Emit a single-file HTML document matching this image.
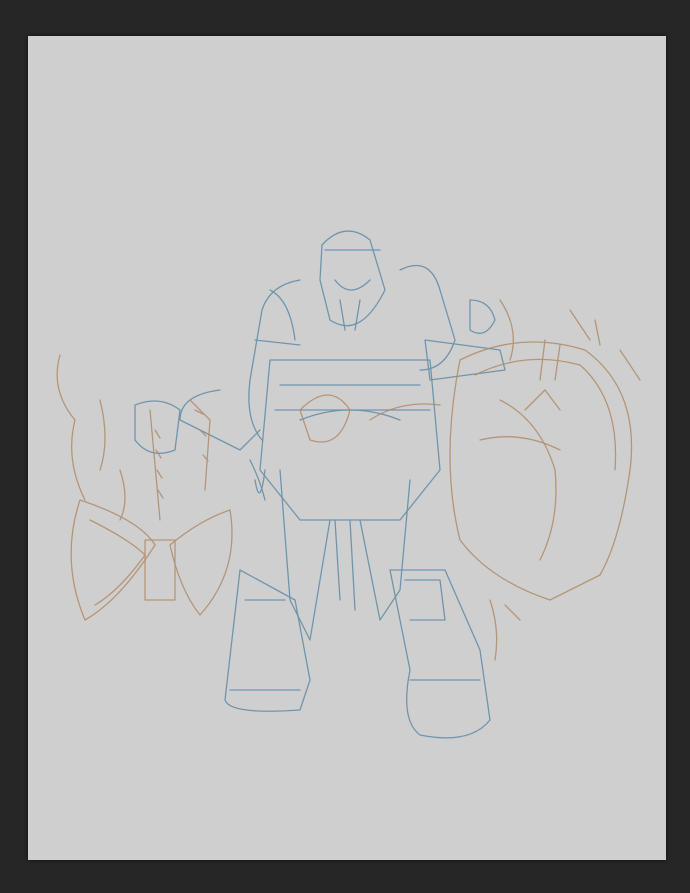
<!DOCTYPE html>
<html><head><style>
html,body{margin:0;padding:0;background:#262626;width:690px;height:893px;overflow:hidden}
.c{position:absolute;left:28px;top:36px;width:638px;height:824px;background:#cfcfcf;box-shadow:0 0 4px #111}
svg{position:absolute;left:0;top:0}
</style></head><body>
<div class="c"></div>
<svg width="690" height="893" fill="none" stroke-linecap="round" stroke-linejoin="round">
<g stroke="#5f8ca8" stroke-width="1.3" opacity="0.85">
<path d="M322 245 Q345 220 370 240 L385 290 Q360 340 330 320 L320 280 Z"/>
<path d="M325 250 L380 250 M335 280 Q350 300 370 280 M340 300 L345 330 M360 300 L355 330"/>
<path d="M300 280 Q270 285 262 310 L250 380 Q245 420 262 440"/>
<path d="M270 290 Q290 300 295 340 M255 340 L300 345"/>
<path d="M400 270 Q430 255 440 290 L455 340 Q445 370 420 370"/>
<path d="M425 340 L500 350 L505 370 L430 380 Z M470 300 Q490 300 495 320 Q485 340 470 330 Z"/>
<path d="M270 360 L430 360 L440 470 L400 520 L300 520 L260 470 Z"/>
<path d="M280 385 L420 385 M275 410 L430 410"/>
<path d="M300 420 Q350 400 400 420"/>
<path d="M280 470 L290 600 L310 640 L330 520"/>
<path d="M360 520 L380 620 L400 590 L410 480"/>
<path d="M335 520 L340 600 M350 520 L355 610"/>
<path d="M240 570 L225 700 Q230 715 300 710 L310 680 L295 600 Z"/>
<path d="M230 690 L300 690 M245 600 L285 600"/>
<path d="M390 570 L410 670 Q400 720 420 735 Q470 745 490 720 L480 650 L445 570 Z"/>
<path d="M410 680 L480 680 M405 580 L440 580 L445 620 L410 620"/>
<path d="M220 390 Q180 395 180 420 L240 450 L260 430"/>
<path d="M135 405 Q160 395 180 410 L175 450 Q150 460 135 440 Z"/>
<path d="M250 460 Q260 480 265 500 M255 480 Q260 510 265 470"/>
</g>
<g stroke="#b08c68" stroke-width="1.3" opacity="0.85">
<path d="M150 410 L160 520"/><path d="M190 400 L210 420 L205 490"/>
<path d="M155 430 l5 8 M156 450 l5 8 M157 470 l5 8 M158 490 l5 8 M195 410 l8 4 M200 430 l6 6 M203 455 l5 6"/>
<path d="M80 500 Q140 520 155 545 Q120 600 85 620 Q60 560 80 500 Z"/>
<path d="M90 520 Q130 540 145 555 Q120 590 95 605"/>
<path d="M170 545 Q200 520 230 510 Q240 570 200 615 Q180 590 170 545 Z"/>
<path d="M145 540 L175 540 L175 600 L145 600 Z"/>
<path d="M60 355 Q50 390 75 420 Q65 460 85 500"/>
<path d="M100 400 Q110 440 100 470 M120 470 Q130 500 120 520"/>
<path d="M460 360 Q520 330 585 350 Q640 390 630 470 Q620 540 600 575 L550 600 Q490 580 460 540 Q440 460 460 360 Z"/>
<path d="M475 375 Q525 350 580 365 Q620 400 615 470"/>
<path d="M500 400 Q540 420 555 470 Q560 520 540 560"/>
<path d="M480 440 Q520 430 560 450 M525 410 L545 390 L560 410"/>
<path d="M540 380 L545 340 M555 380 L560 345"/>
<path d="M500 300 Q520 330 510 360 M570 310 L590 340 M620 350 L640 380 M595 320 L600 345"/>
<path d="M370 420 Q400 400 440 405"/>
<path d="M300 410 Q330 380 350 410 Q340 450 310 440 Z"/>
<path d="M490 600 Q500 630 495 660 M505 605 L520 620"/>
</g>
</svg>
</body></html>
